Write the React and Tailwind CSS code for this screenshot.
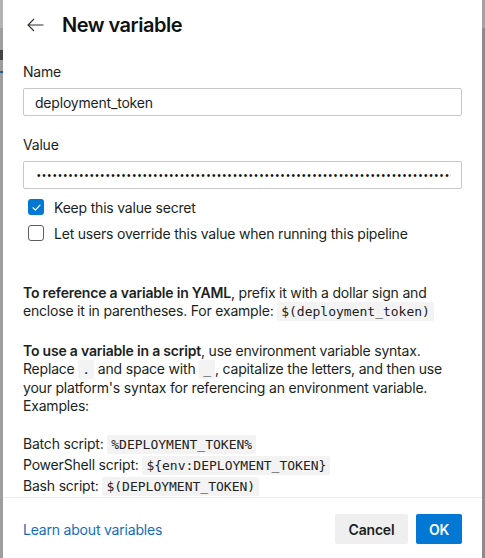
import React from 'react';

const DOTS = '•'.repeat(90);

function Code({ children }) {
  return (
    <code className="bg-[#f3f3f3] rounded-[2px] px-[4px] py-[2px] text-[13px] tracking-normal text-[#222] font-['DejaVu_Sans_Mono',monospace]">
      {children}
    </code>
  );
}

function Checkbox({ checked, label }) {
  return (
    <label className="flex items-center h-[20px] pl-[5px] gap-[10px]">
      {checked ? (
        <span className="w-[16px] h-[16px] rounded-[3px] bg-[#0078d4] flex items-center justify-center">
          <svg width="11" height="11" viewBox="0 0 12 12" fill="none">
            <path d="M2.2 6.3 L4.8 8.8 L9.8 3.4" stroke="white" strokeWidth="1.3" strokeLinecap="round" strokeLinejoin="round" />
          </svg>
        </span>
      ) : (
        <span className="w-[16px] h-[16px] rounded-[3px] border border-[#605e5c] bg-white" />
      )}
      <span className="text-[14px] text-[#201f1e]">{label}</span>
    </label>
  );
}

export default function App() {
  return (
    <div className="h-[558px] flex bg-white font-['Inter',sans-serif] tracking-[-0.2px] text-[#201f1e] overflow-hidden">
      <div className="w-[3px] shrink-0 flex flex-col bg-[#9e9e9e]">
        <div className="h-[28px] bg-[#b3b3b3]" />
        <div className="mt-[22px] h-[10px] bg-[#444]" />
        <div className="mt-[11px] h-[2px] bg-[#1f5f99]" />
      </div>

      <div className="flex-1 min-w-0 flex flex-col bg-white">
        <div className="px-5 flex-1">
          <div className="pt-[11px] h-[39px] flex items-center">
            <button className="w-[20px] h-[28px] ml-[4px] flex items-center text-[#323130]">
              <svg width="17" height="14" viewBox="0 0 17 14" fill="none">
                <path d="M16.5 7 H1 M7 1 L1 7 L7 13" stroke="currentColor" strokeWidth="1.1" strokeLinejoin="miter" />
              </svg>
            </button>
            <h1 className="ml-[15px] text-[20px] leading-[28px] font-semibold tracking-[-0.5px] text-[#111]">New variable</h1>
          </div>

          <div className="mt-[23px] text-[14px] leading-[20px]">Name</div>
          <div className="mt-[6px] h-[28px] border border-[#c8c8c8] rounded-[2px] flex items-center px-[11px] text-[14px]">
            deployment_token
          </div>

          <div className="mt-[19px] text-[14px] leading-[20px]">Value</div>
          <div className="mt-[6px] h-[28px] border border-[#c8c8c8] rounded-[2px] flex items-center pl-[13px] pr-[10px]">
            <div className="flex-1 min-w-0 overflow-hidden whitespace-nowrap text-[10px] tracking-[1.8px] text-[#111] font-['Liberation_Sans',sans-serif]">
              {DOTS}
            </div>
          </div>

          <div className="mt-[8px]">
            <Checkbox checked label="Keep this value secret" />
          </div>
          <div className="mt-[6px]">
            <Checkbox label="Let users override this value when running this pipeline" />
          </div>

          <p className="mt-[41px] text-[14px] leading-[18px]">
            <b className="font-semibold">To reference a variable in YAML</b>, prefix it with a dollar sign and
            <br />
            enclose it in parentheses. For example: <Code>$(deployment_token)</Code>
          </p>

          <p className="mt-[21px] text-[14px] leading-[18px]">
            <b className="font-semibold">To use a variable in a script</b>, use environment variable syntax.
            <br />
            Replace <Code>.</Code> and space with <Code>_</Code>, capitalize the letters, and then use
            <br />
            your platform's syntax for referencing an environment variable.
            <br />
            Examples:
          </p>

          <div className="mt-[19px] text-[14px] leading-[20px]">
            <div>Batch script: <Code>%DEPLOYMENT_TOKEN%</Code></div>
            <div>PowerShell script: <Code>{'${env:DEPLOYMENT_TOKEN}'}</Code></div>
            <div>Bash script: <Code>$(DEPLOYMENT_TOKEN)</Code></div>
          </div>
        </div>

        <div className="h-px bg-[#ececec]" />
        <div className="px-5 pt-[16px] pb-[14px] flex items-center">
          <a className="text-[14px] text-[#106ebe]">Learn about variables</a>
          <div className="ml-auto flex gap-[8px]">
            <button className="h-[30px] w-[73px] rounded-[2px] bg-[#efefef] text-[14px] font-semibold text-[#201f1e]">Cancel</button>
            <button className="h-[30px] w-[46px] rounded-[2px] bg-[#0078d4] text-[14px] font-semibold text-white">OK</button>
          </div>
        </div>
      </div>

      <div className="w-[3px] shrink-0 flex flex-col bg-[#8c8c8c]">
        <div className="h-[28px] bg-[#a3a3a3]" />
      </div>
    </div>
  );
}
